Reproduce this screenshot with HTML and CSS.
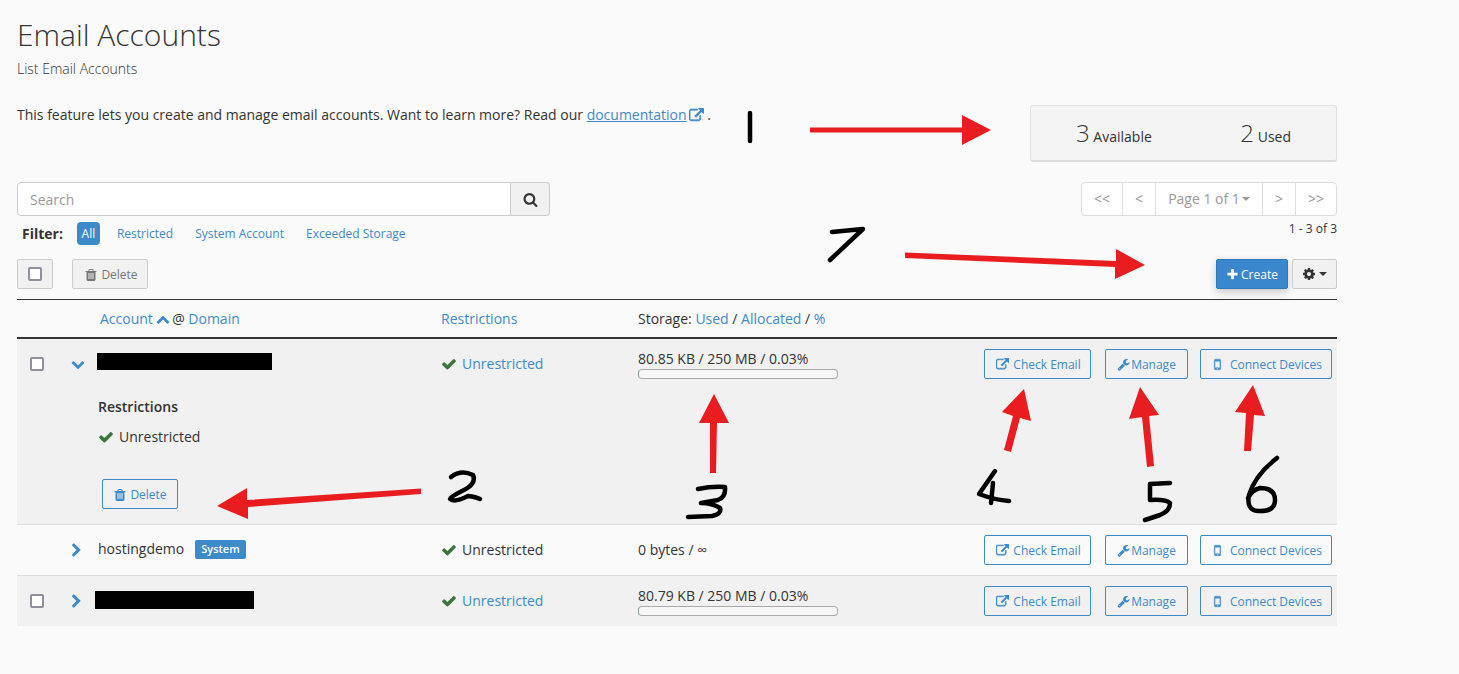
FILE: index.html
```html
<!DOCTYPE html>
<html lang="en">
<head>
<meta charset="utf-8">
<title>Email Accounts</title>
<link rel="stylesheet" href="styles.css">
</head>
<body>
<svg class="defs" width="0" height="0" aria-hidden="true">
  <symbol id="i-check" viewBox="0 0 1792 1792"><path d="M1671 566q0 40-28 68l-724 724-136 136q-28 28-68 28t-68-28l-136-136-362-362q-28-28-28-68t28-68l136-136q28-28 68-28t68 28l294 295 656-657q28-28 68-28t68 28l136 136q28 28 28 68z"/></symbol>
  <symbol id="i-plus" viewBox="0 0 1792 1792"><path d="M1600 736v192q0 40-28 68t-68 28h-416v416q0 40-28 68t-68 28h-192q-40 0-68-28t-28-68v-416h-416q-40 0-68-28t-28-68v-192q0-40 28-68t68-28h416v-416q0-40 28-68t68-28h192q40 0 68 28t28 68v416h416q40 0 68 28t28 68z"/></symbol>
  <symbol id="i-search" viewBox="0 0 1792 1792"><path d="M1216 832q0-185-131.500-316.500t-316.500-131.500-316.500 131.500-131.500 316.500 131.500 316.500 316.500 131.500 316.500-131.500 131.500-316.500zm512 832q0 52-38 90t-90 38q-54 0-90-38l-343-342q-179 124-399 124-143 0-273.500-55.500t-225-150-150-225-55.500-273.500 55.500-273.500 150-225 225-150 273.500-55.500 273.500 55.500 225 150 150 225 55.500 273.500q0 220-124 399l343 343q37 37 37 90z"/></symbol>
  <symbol id="i-right" viewBox="0 0 1792 1792"><path d="M1363 877l-742 742q-19 19-45 19t-45-19l-166-166q-19-19-19-45t19-45l531-531-531-531q-19-19-19-45t19-45l166-166q19-19 45-19t45 19l742 742q19 19 19 45t-19 45z"/></symbol>
  <symbol id="i-down" viewBox="0 0 1792 1792"><path d="M1683 808l-742 741q-19 19-45 19t-45-19l-742-741q-19-19-19-45.500t19-45.500l166-165q19-19 45-19t45 19l531 531 531-531q19-19 45-19t45 19l166 165q19 19 19 45.500t-19 45.500z"/></symbol>
  <symbol id="i-up" viewBox="0 0 1792 1792"><path d="M1683 1331l-166 165q-19 19-45 19t-45-19l-531-531-531 531q-19 19-45 19t-45-19l-166-165q-19-19-19-45.500t19-45.500l742-741q19-19 45-19t45 19l742 741q19 19 19 45.500t-19 45.500z"/></symbol>
  <symbol id="i-ext" viewBox="0 0 1792 1792"><path d="M1408 928v320q0 119-84.500 203.500t-203.500 84.500h-832q-119 0-203.500-84.500t-84.500-203.500v-832q0-119 84.500-203.500t203.500-84.500h704q14 0 23 9t9 23v64q0 14-9 23t-23 9h-704q-66 0-113 47t-47 113v832q0 66 47 113t113 47h832q66 0 113-47t47-113v-320q0-14 9-23t23-9h64q14 0 23 9t9 23zm384-864v512q0 26-19 45t-45 19-45-19l-176-176-652 652q-10 10-23 10t-23-10l-114-114q-10-10-10-23t10-23l652-652-176-176q-19-19-19-45t19-45 45-19h512q26 0 45 19t19 45z"/></symbol>
  <symbol id="i-trash" viewBox="0 0 1792 1792"><path d="M704 1376v-704q0-14-9-23t-23-9h-64q-14 0-23 9t-9 23v704q0 14 9 23t23 9h64q14 0 23-9t9-23zm256 0v-704q0-14-9-23t-23-9h-64q-14 0-23 9t-9 23v704q0 14 9 23t23 9h64q14 0 23-9t9-23zm256 0v-704q0-14-9-23t-23-9h-64q-14 0-23 9t-9 23v704q0 14 9 23t23 9h64q14 0 23-9t9-23zm-544-992h448l-48-117q-7-9-17-11h-317q-10 2-17 11zm928 32v64q0 14-9 23t-23 9h-96v948q0 83-47 143.500t-113 60.500h-832q-66 0-113-58.500t-47-141.500v-952h-96q-14 0-23-9t-9-23v-64q0-14 9-23t23-9h309l70-167q15-37 54-63t79-26h320q40 0 79 26t54 63l70 167h309q14 0 23 9t9 23z"/></symbol>
  <symbol id="i-wrench" viewBox="0 0 1792 1792"><path d="M448 1472q0-26-19-45t-45-19-45 19-19 45 19 45 45 19 45-19 19-45zm644-420l-682 682q-37 37-90 37-52 0-91-37l-106-108q-38-36-38-90 0-53 38-91l681-681q39 98 114.500 173.500t173.500 114.500zm634-435q0 39-23 106-47 134-164.500 217.500t-258.500 83.500q-185 0-316.500-131.500t-131.500-316.500 131.500-316.500 316.500-131.500q58 0 121.500 16.500t107.500 46.500q16 11 16 28t-16 28l-293 169v224l193 107q5-3 79-48.500t135.500-81 70.500-35.500q15 0 23.500 10t8.500 25z"/></symbol>
  <symbol id="i-cog" viewBox="0 0 1792 1792"><path d="M1152 896q0-106-75-181t-181-75-181 75-75 181 75 181 181 75 181-75 75-181zm512-109v222q0 12-8 23t-20 13l-185 28q-19 54-39 91 35 50 107 138 10 12 10 25t-9 23q-27 37-99 108t-94 71q-12 0-26-9l-138-108q-44 23-91 38-16 136-29 186-7 28-36 28h-222q-14 0-24.500-8.500t-11.500-21.500l-28-184q-49-16-90-37l-141 107q-10 9-25 9-14 0-25-11-126-114-165-168-7-10-7-23 0-12 8-23 15-21 51-66.500t54-70.500q-27-50-41-99l-183-27q-13-2-21-12.500t-8-23.500v-222q0-12 8-23t19-13l186-28q14-46 39-92-40-57-107-138-10-12-10-24 0-10 9-23 26-36 98.500-107.500t94.500-71.500q13 0 26 10l138 107q44-23 91-38 16-136 29-186 7-28 36-28h222q14 0 24.500 8.500t11.500 21.500l28 184q49 16 90 37l142-107q9-9 24-9 13 0 25 10 129 119 165 170 7 8 7 22 0 12-8 23-15 21-51 66.500t-54 70.500q26 50 41 98l183 28q13 2 21 12.500t8 23.500z"/></symbol>
  <symbol id="i-mobile" viewBox="0 0 1792 1792"><path d="M976 1408q0-33-23.500-56.500t-56.500-23.500-56.500 23.500-23.500 56.500 23.500 56.500 56.500 23.500 56.500-23.500 23.500-56.500zm208-160v-704q0-13-9.500-22.500t-22.500-9.500h-512q-13 0-22.500 9.500t-9.500 22.500v704q0 13 9.500 22.500t22.500 9.500h512q13 0 22.500-9.500t9.500-22.500zm-192-848q0-16-16-16h-160q-16 0-16 16t16 16h160q16 0 16-16zm288-16v1024q0 52-38 90t-90 38h-512q-52 0-90-38t-38-90v-1024q0-52 38-90t90-38h512q52 0 90 38t38 90z"/></symbol>
</svg>

<main class="page">
  <h1 class="title">Email Accounts</h1>
  <p class="subtitle">List Email Accounts</p>

  <section class="intro">
    <p class="intro-text">This feature lets you create and manage email accounts. Want to learn more? Read our <a class="doc-link" href="#">documentation</a> <svg class="ico ico-doc"><use href="#i-ext"/></svg>.</p>
    <div class="stats">
      <span class="stat"><b>3</b> Available</span>
      <span class="stat"><b>2</b> Used</span>
    </div>
  </section>

  <section class="toolbar">
    <div class="tool-left">
      <div class="search">
        <span class="search-input">Search</span>
        <span class="search-btn"><svg class="ico ico-search"><use href="#i-search"/></svg></span>
      </div>
      <div class="filters">
        <strong class="filter-label">Filter:</strong>
        <span class="pill">All</span>
        <a class="filter" href="#">Restricted</a>
        <a class="filter" href="#">System Account</a>
        <a class="filter" href="#">Exceeded Storage</a>
      </div>
    </div>
    <div class="tool-right">
      <div class="pager">
        <span class="pg pg-first">&lt;&lt;</span>
        <span class="pg pg-b">&lt;</span>
        <span class="pg pg-c">Page 1 of 1<i class="caret"></i></span>
        <span class="pg pg-b">&gt;</span>
        <span class="pg pg-a">&gt;&gt;</span>
      </div>
      <div class="count">1 - 3 of 3</div>
    </div>
  </section>

  <section class="actions">
    <span class="btn-grey btn-check"><i class="box"></i></span>
    <span class="btn-grey btn-del"><svg class="ico ico-tr"><use href="#i-trash"/></svg>Delete</span>
    <span class="btn-create"><svg class="ico ico-plus"><use href="#i-plus"/></svg>Create</span>
    <span class="btn-grey btn-gear"><svg class="ico ico-gear"><use href="#i-cog"/></svg><i class="caret caret-dark"></i></span>
  </section>

  <section class="table">
    <div class="row head">
      <div></div><div></div>
      <div class="head-account"><a href="#">Account</a> <svg class="ico ico-up"><use href="#i-up"/></svg> @ <a href="#">Domain</a></div>
      <div><a href="#">Restrictions</a></div>
      <div>Storage: <a href="#">Used</a> / <a href="#">Allocated</a> / <a href="#">%</a></div>
      <div></div>
    </div>

    <div class="row item alt open">
      <div class="cell-check"><i class="box"></i></div>
      <div class="cell-chev"><svg class="ico ico-chev-d"><use href="#i-down"/></svg></div>
      <div class="cell-name"><span class="redact redact-1"></span></div>
      <div class="cell-status"><svg class="ico ico-ok"><use href="#i-check"/></svg><a href="#">Unrestricted</a></div>
      <div class="cell-storage"><span>80.85 KB / 250 MB / 0.03%</span><span class="bar"></span></div>
      <div class="cell-btns">
        <a class="btn btn-a" href="#"><svg class="ico ico-ext"><use href="#i-ext"/></svg>Check Email</a>
        <a class="btn btn-b" href="#"><svg class="ico ico-wr"><use href="#i-wrench"/></svg>Manage</a>
        <a class="btn btn-c" href="#"><svg class="ico ico-mob"><use href="#i-mobile"/></svg>Connect Devices</a>
      </div>
      <div class="detail">
        <div class="detail-title">Restrictions</div>
        <div class="detail-status"><svg class="ico ico-ok"><use href="#i-check"/></svg>Unrestricted</div>
        <a class="btn btn-delete" href="#"><svg class="ico ico-tr"><use href="#i-trash"/></svg>Delete</a>
      </div>
    </div>

    <div class="row item">
      <div class="cell-check"></div>
      <div class="cell-chev"><svg class="ico ico-chev-r"><use href="#i-right"/></svg></div>
      <div class="cell-name"><span class="name">hostingdemo</span><span class="badge">System</span></div>
      <div class="cell-status"><svg class="ico ico-ok"><use href="#i-check"/></svg>Unrestricted</div>
      <div class="cell-plain">0 bytes / ∞</div>
      <div class="cell-btns">
        <a class="btn btn-a" href="#"><svg class="ico ico-ext"><use href="#i-ext"/></svg>Check Email</a>
        <a class="btn btn-b" href="#"><svg class="ico ico-wr"><use href="#i-wrench"/></svg>Manage</a>
        <a class="btn btn-c" href="#"><svg class="ico ico-mob"><use href="#i-mobile"/></svg>Connect Devices</a>
      </div>
    </div>

    <div class="row item alt last">
      <div class="cell-check"><i class="box"></i></div>
      <div class="cell-chev"><svg class="ico ico-chev-r"><use href="#i-right"/></svg></div>
      <div class="cell-name"><span class="redact redact-2"></span></div>
      <div class="cell-status"><svg class="ico ico-ok"><use href="#i-check"/></svg><a href="#">Unrestricted</a></div>
      <div class="cell-storage"><span>80.79 KB / 250 MB / 0.03%</span><span class="bar"></span></div>
      <div class="cell-btns">
        <a class="btn btn-a" href="#"><svg class="ico ico-ext"><use href="#i-ext"/></svg>Check Email</a>
        <a class="btn btn-b" href="#"><svg class="ico ico-wr"><use href="#i-wrench"/></svg>Manage</a>
        <a class="btn btn-c" href="#"><svg class="ico ico-mob"><use href="#i-mobile"/></svg>Connect Devices</a>
      </div>
    </div>
  </section>
</main>

<svg class="markup" width="1459" height="674" viewBox="0 0 1459 674" aria-hidden="true">
  <g class="arrow">
    <path d="M810 127.500H962V115L991 130 962 145V132.500H810Z"/>
    <path d="M905 252.500L1116 261V249L1145 265 1115 279V267L905 258Z"/>
    <path d="M421 488.500L247 500V488L217 506 248 519V507L421 494Z"/>
    <path d="M710 473V423H699L714 394 729 423H717L716 473Z"/>
    <path d="M1004 450L1013 416 1002 412 1024 389 1031 421 1020 418 1011 452Z"/>
    <path d="M1147 467L1142 417 1129 419 1140 387 1159 415 1149 416 1154 466Z"/>
    <path d="M1244 451L1246 413 1235 412 1253 385 1265 416 1254 415 1251 451Z"/>
  </g>
  <g class="ink">
    <path d="M750 113L750 141"/>
    <path d="M832 232L863 229 830 260"/>
    <path d="M451 477Q461 469 473 475 477 484 462 491 450 497 450 499 454 503 468 496 476 497 480 499"/>
    <path d="M698 489Q712 486 725 487 726 497 718 500L701 503Q712 503 720 508 722 514 712 516L688 517"/>
    <path d="M995 471L979 494Q995 500 1009 501M993 483L991 503"/>
    <path d="M1170 483L1150 484 1150 500Q1166 499 1170 503 1170 511 1160 515L1145 520"/>
    <path d="M1277 458Q1255 475 1249 495 1246 510 1258 511 1275 512 1275 500 1275 488 1260 488 1252 490 1248 498"/>
  </g>
</svg>
</body>
</html>
```
FILE: styles.css
```css
* { box-sizing: border-box; }
html, body { margin: 0; padding: 0; height: 100%; }
body {
  background: #fafafa;
  color: #333;
  font-family: "Open Sans", "Liberation Sans", sans-serif;
  font-size: 14px;
  line-height: 20px;
  overflow: hidden;
  position: relative;
}
a { color: #3d8acb; text-decoration: none; }
i { font-style: normal; display: inline-block; }
.defs { position: absolute; }
.ico { display: inline-block; fill: currentColor; flex: none; }
.ico-ext { width: 13px; height: 13px; margin-right: 4px; stroke: currentColor; stroke-width: 70; }
.ico-wr { width: 13px; height: 13px; margin-right: 1px; }
.ico-mob { width: 15px; height: 15px; margin-right: 5px; stroke: currentColor; stroke-width: 40; }
.ico-tr { width: 14px; height: 14px; margin-right: 3px; }
.ico-plus { width: 13px; height: 13px; margin-right: 2px; }

.page { width: 1337px; padding: 18px 0 0 17px; }
.title { margin: 0; font-size: 30px; line-height: 33px; font-weight: 300; color: #333; }
.subtitle { margin: 8px 0 0; font-weight: 300; font-size: 14px; line-height: 20px; }

.intro { display: flex; justify-content: space-between; align-items: flex-start; margin-top: 26px; }
.intro-text { margin: 0; }
.doc-link { text-decoration: underline; }
.ico-doc { width: 15px; height: 15px; color: #3d8acb; vertical-align: -3px; margin-left: -1px; margin-right: 3px; stroke: currentColor; stroke-width: 90; }
.stats {
  width: 307px; height: 57px;
  display: flex; justify-content: space-between; align-items: center;
  padding: 4px 45px 0;
  background: #f4f4f4;
  border: 1px solid #e0e0e0;
  border-bottom: 2px solid #dcdcdc;
  border-radius: 3px;
}
.stat { font-size: 14px; }
.stat b { font-weight: 300; font-size: 24px; }

.toolbar { display: flex; justify-content: space-between; align-items: flex-start; margin-top: 20px; }
.tool-left { width: 533px; }
.search { display: flex; height: 34px; }
.search-input {
  flex: 1; background: #fff;
  border: 1px solid #ccc; border-radius: 4px 0 0 4px;
  padding: 7px 12px; color: #999;
}
.search-btn {
  width: 39px; display: flex; align-items: center; justify-content: center;
  background: #f1f1f1; border: 1px solid #ccc; border-left: 0; border-radius: 0 4px 4px 0;
}
.ico-search { width: 15px; height: 15px; color: #333; }
.filters { display: flex; align-items: center; margin-top: 6px; font-size: 12px; padding-left: 5px; height: 23px; }
.filter-label { font-weight: 700; font-size: 14px; margin-right: 14px; }
.pill { background: #3d8acb; color: #fff; width: 23px; height: 23px; border-radius: 4px; text-align: center; line-height: 23px; margin-right: 17px; }
.filter { margin-right: 22px; }

.tool-right { width: 256px; }
.pager {
  display: flex; height: 34px; background: #fff;
  border: 1px solid #ddd; border-radius: 4px; color: #999;
}
.pg { display: flex; align-items: center; justify-content: center; border-left: 1px solid #ddd; }
.pg:first-child { border-left: 0; }
.pg-first { width: 40px; }
.pg-a { width: 41px; }
.pg-b { width: 33px; }
.pg-c { flex: 1; }
.caret { width: 0; height: 0; border: 4px solid transparent; border-top-color: currentColor; border-bottom: 0; margin-left: 2px; }
.caret-dark { color: #333; margin-left: 3px; }
.count { text-align: right; font-size: 12px; line-height: 16px; margin-top: 5px; }

.actions { display: flex; align-items: center; margin-top: 14px; height: 30px; }
.btn-grey {
  display: inline-flex; align-items: center; justify-content: center; height: 30px;
  background: #f1f1f1; border: 1px solid #ccc; border-radius: 2px; font-size: 12px; color: #777;
}
.btn-check { width: 36px; margin-right: 19px; }
.btn-del { width: 76px; padding-left: 2px; padding-top: 1px; }
.btn-create {
  margin-left: auto; width: 72px; height: 30px; padding-top: 1px;
  display: inline-flex; align-items: center; justify-content: center;
  background: #3a87cd; color: #fff; font-size: 12px; border-radius: 2px;
  border: 1px solid #2f78ba;
  box-shadow: 0 3px 8px rgba(0,0,0,.2);
}
.btn-gear { width: 45px; margin-left: 4px; color: #333; }
.ico-gear { width: 14px; height: 14px; }

.box { width: 14px; height: 14px; border: 2px solid #8f8f9d; border-radius: 2px; background: #fff; }

.table { margin-top: 10px; border-top: 1px solid #333; }
.row {
  display: grid;
  grid-template-columns: 48px 33px 343px 197px 200px 1fr;
  align-items: center;
}
.head { height: 37px; border-bottom: 2px solid #333; box-sizing: content-box; }
.head-account { padding-left: 2px; }
.ico-up { width: 14px; height: 14px; vertical-align: -2px; color: #3d8acb; margin: 0 -1px; }
.item { height: 50px; border-bottom: 1px solid #ddd; box-sizing: content-box; }
.item.last { border-bottom: 0; }
.item.open { height: 185px; grid-template-rows: 50px 1fr; }
.alt { background: #f1f1f1; }
.cell-check { display: flex; padding-left: 13px; }
.cell-chev { display: flex; }
.ico-chev-d { width: 14px; height: 14px; color: #3d8acb; margin-left: 6px; }
.ico-chev-r { width: 15px; height: 15px; color: #3d8acb; margin-left: 4px; }
.cell-name { display: flex; align-items: center; }
.name { margin-right: 11px; position: relative; top: -1px; }
.badge {
  background: #3d8acb; color: #fff; font-size: 11px; font-weight: 600;
  line-height: 18px; height: 19px; padding: 0 6px; border-radius: 2px; margin-top: -1px;
}
.redact { display: block; background: #000; }
.redact-1 { width: 175px; height: 17px; margin-top: -5px; margin-left: -1px; }
.redact-2 { width: 159px; height: 18px; margin-top: -3px; margin-left: -3px; }
.cell-status { display: flex; align-items: center; }
.ico-ok { width: 16px; height: 16px; color: #3c763d; margin-right: 5px; }
.cell-storage { display: flex; flex-direction: column; }
.bar { display: block; width: 200px; height: 10px; border: 1px solid #aaa; border-left-color: #7fa58a; border-radius: 4px; background: #f7f7f7; }
.cell-btns { display: flex; justify-content: flex-end; padding-right: 5px; }
.btn {
  display: inline-flex; align-items: center; justify-content: center; height: 30px; padding-top: 1px;
  border: 1px solid #3d8acb; border-radius: 2px; font-size: 12px; color: #3d8acb;
}
.btn-a { width: 107px; margin-right: 14px; padding-left: 2px; }
.btn-b { width: 83px; margin-right: 12px; }
.btn-c { width: 132px; }
.detail { grid-column: 3 / 7; align-self: start; }
.detail-title { font-weight: 600; margin-top: 8px; }
.detail-status { display: flex; align-items: center; margin-top: 10px; }
.btn-delete { width: 76px; margin-top: 32px; margin-left: 4px; }
.markup { position: absolute; left: 0; top: 0; pointer-events: none; }
.arrow path { fill: #e91c1f; }
.ink path { fill: none; stroke: #000; stroke-width: 4.5; stroke-linecap: round; stroke-linejoin: round; }
```
